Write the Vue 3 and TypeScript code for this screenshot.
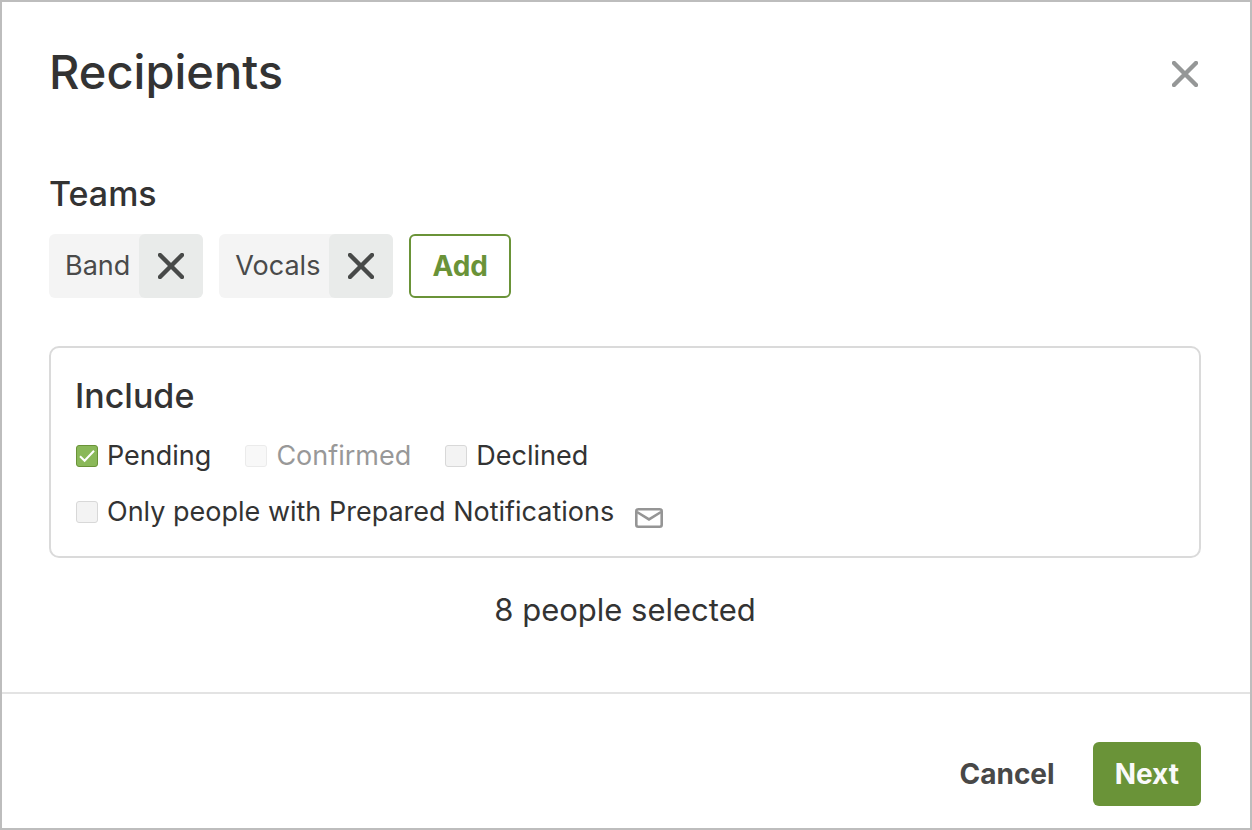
<script setup lang="ts">
import { computed, ref } from 'vue'

interface Team {
  id: number
  name: string
}

interface StatusOption {
  id: string
  label: string
  checked: boolean
  disabled: boolean
}

const teams = ref<Team[]>([
  { id: 1, name: 'Band' },
  { id: 2, name: 'Vocals' },
])

const statuses = ref<StatusOption[]>([
  { id: 'pending', label: 'Pending', checked: true, disabled: false },
  { id: 'confirmed', label: 'Confirmed', checked: false, disabled: true },
  { id: 'declined', label: 'Declined', checked: false, disabled: false },
])

const onlyPrepared = ref(false)
const count = ref(8)
const summary = computed(() => `${count.value} people selected`)

function removeTeam(id: number) {
  teams.value = teams.value.filter((team) => team.id !== id)
}
</script>

<template>
  <section class="dialog" role="dialog" aria-labelledby="dialog-title">
    <header class="header">
      <h1 id="dialog-title" class="title">Recipients</h1>
      <button type="button" class="close" aria-label="Close">
        <svg class="cross" viewBox="0 0 26 26" aria-hidden="true">
          <path d="M2 2 24 24M24 2 2 24" />
        </svg>
      </button>
    </header>

    <div class="body">
      <h2 class="subtitle">Teams</h2>
      <div class="teams">
        <div v-for="team in teams" :key="team.id" class="tag">
          <span class="tag-name">{{ team.name }}</span>
          <button
            type="button"
            class="tag-remove"
            :aria-label="`Remove ${team.name}`"
            @click="removeTeam(team.id)"
          >
            <svg class="cross" viewBox="0 0 26 26" aria-hidden="true">
              <path d="M2 2 24 24M24 2 2 24" />
            </svg>
          </button>
        </div>
        <button type="button" class="button add">Add</button>
      </div>

      <div class="panel" role="group" aria-labelledby="include-title">
        <h2 id="include-title" class="subtitle">Include</h2>
        <div class="options">
          <div class="row">
            <label
              v-for="status in statuses"
              :key="status.id"
              class="option"
              :class="{ disabled: status.disabled }"
              :for="status.id"
            >
              <span class="box">
                <input
                  :id="status.id"
                  v-model="status.checked"
                  type="checkbox"
                  :disabled="status.disabled"
                />
                <svg v-if="status.checked" class="tick" viewBox="0 0 22 22" aria-hidden="true">
                  <path d="M4 11.2 8.6 15.8 18 5.8" />
                </svg>
              </span>
              <span>{{ status.label }}</span>
            </label>
          </div>
          <div class="row prepared">
            <label class="option" for="prepared">
              <span class="box">
                <input id="prepared" v-model="onlyPrepared" type="checkbox" />
                <svg v-if="onlyPrepared" class="tick" viewBox="0 0 22 22" aria-hidden="true">
                  <path d="M4 11.2 8.6 15.8 18 5.8" />
                </svg>
              </span>
              <span>Only people with Prepared Notifications</span>
            </label>
            <svg class="mail" viewBox="0 0 28 20" aria-hidden="true">
              <rect x="1.3" y="1.3" width="25.4" height="17.4" rx="2" />
              <path d="M2 4 14 11.4 26 4" />
            </svg>
          </div>
        </div>
      </div>

      <p class="summary">{{ summary }}</p>
    </div>

    <footer class="footer">
      <button type="button" class="button cancel">Cancel</button>
      <button type="button" class="button next">Next</button>
    </footer>
  </section>
</template>

<style>
body {
  margin: 0;
  background: #fff;
}
</style>

<style scoped>
.dialog {
  box-sizing: border-box;
  min-height: 100vh;
  display: flex;
  flex-direction: column;
  border: 2px solid #bdbdbd;
  background: #fff;
  color: #333;
  font-family: Inter, "Liberation Sans", sans-serif;
  font-size: 27px;
  line-height: 40px;
}

h1,
h2,
p {
  margin: 0;
}

button {
  font: inherit;
  padding: 0;
  border: 0;
  background: none;
  cursor: pointer;
}

.header {
  display: flex;
  align-items: flex-start;
  justify-content: space-between;
  padding: 40px 49px 0 47px;
}

.title {
  font-size: 47px;
  font-weight: 500;
  line-height: 60px;
}

.close {
  display: flex;
  padding: 19px 3px 0;
  color: #959797;
}

.cross {
  display: block;
  width: 26px;
  height: 26px;
  fill: none;
  stroke: currentColor;
  stroke-width: 4.4;
  stroke-linecap: round;
}

.body {
  flex: 1;
  padding: 72px 49px 62px 47px;
}

.subtitle {
  font-size: 34px;
  font-weight: 500;
  line-height: 40px;
}

.teams {
  display: flex;
  flex-wrap: wrap;
  gap: 16px;
  margin: 20px 0 48px;
}

.tag {
  display: flex;
  align-items: center;
  border-radius: 6px;
  background: #f4f4f4;
  color: #4a4a4a;
}

.tag-name {
  padding: 0 9px 0 16px;
}

.tag-remove {
  display: flex;
  align-items: center;
  justify-content: center;
  width: 64px;
  height: 64px;
  border-radius: 6px;
  background: #e9ebea;
  color: #484a49;
}

.button {
  box-sizing: border-box;
  height: 64px;
  padding: 0 22px;
  border-radius: 6px;
  font-size: 28px;
  font-weight: 700;
}

.add {
  padding: 0 21px;
  border: 2px solid #6a9338;
  color: #6a9338;
}

.panel {
  padding: 28px 24px 24px;
  border: 2px solid #dadada;
  border-radius: 10px;
}

.options {
  display: flex;
  flex-direction: column;
  gap: 16px;
  margin-top: 20px;
}

.row {
  display: flex;
  flex-wrap: wrap;
  gap: 0 33px;
}

.prepared {
  gap: 21px;
}

.option {
  display: flex;
  align-items: center;
  gap: 9px;
}

.disabled {
  opacity: 0.5;
}

.box {
  display: grid;
  margin-left: 1px;
}

.box > * {
  grid-area: 1 / 1;
}

.box input {
  appearance: none;
  box-sizing: border-box;
  width: 22px;
  height: 22px;
  margin: 0;
  border: 1px solid #d8d8d8;
  border-radius: 3px;
  background: #f3f3f3;
}

.box input:checked {
  border-color: #6a9338;
  background: #8ab859;
}

.tick {
  width: 22px;
  height: 22px;
  fill: none;
  stroke: #fff;
  stroke-width: 2;
  pointer-events: none;
}

.mail {
  align-self: flex-end;
  width: 28px;
  height: 20px;
  margin-bottom: 4px;
  fill: none;
  stroke: #959595;
  stroke-width: 2.6;
}

.summary {
  margin-top: 32px;
  font-size: 31px;
  text-align: center;
}

.footer {
  display: flex;
  justify-content: flex-end;
  gap: 16px;
  padding: 48px 49px 22px;
  border-top: 2px solid #e3e3e3;
}

.cancel {
  color: #484848;
}

.next {
  background: #6a9338;
  color: #fafafa;
}
</style>
